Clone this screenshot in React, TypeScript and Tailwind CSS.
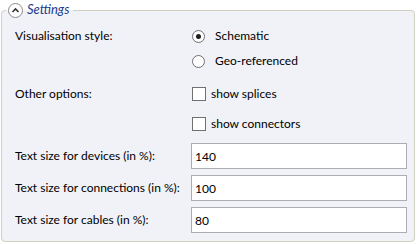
import { useState } from "react";

const sizes = [
  { label: "Text size for devices (in %):", value: "140" },
  { label: "Text size for connections (in %):", value: "100" },
  { label: "Text size for cables (in %):", value: "80" },
];

function Radio({ checked, label, onClick }: { checked: boolean; label: string; onClick: () => void }) {
  return (
    <button onClick={onClick} className="flex items-center h-full text-left">
      <span className="w-[13px] h-[13px] rounded-full border border-[#6f6f6f] bg-white flex items-center justify-center shrink-0">
        {checked && <span className="w-[5px] h-[5px] rounded-full bg-[#1f1f1f]" />}
      </span>
      <span className="ml-[10px]">{label}</span>
    </button>
  );
}

function Check({ label }: { label: string }) {
  const [on, setOn] = useState(false);
  return (
    <button onClick={() => setOn(!on)} className="flex items-center h-full text-left">
      <span className="w-[14px] h-[14px] border border-[#707070] bg-white flex items-center justify-center shrink-0">
        {on && (
          <svg className="w-[10px] h-[10px]" viewBox="0 0 10 10" fill="none" stroke="#222" strokeWidth={1.6}>
            <path d="M1.5 5.2l2.3 2.3 4.7-5" />
          </svg>
        )}
      </span>
      <span className="ml-[5px]">{label}</span>
    </button>
  );
}

export default function App() {
  const [style, setStyle] = useState("schematic");

  return (
    <div className="w-[417px] h-[244px] bg-white text-[12px] text-black" style={{ fontFamily: "Lato, 'Liberation Sans', sans-serif" }}>
      <fieldset className="ml-[1px] w-[414px] h-[242px] border border-[#cfd0c0] rounded-[4px] bg-[#f0f2f7]">
        <legend className="ml-[4px] px-[2px] flex items-center h-[20px]">
          <span className="w-[15px] h-[15px] rounded-full border border-[#8a8a8a] bg-white flex items-center justify-center">
            <svg className="w-[9px] h-[9px]" viewBox="0 0 9 9" fill="none" stroke="#333" strokeWidth={1.6}>
              <path d="M1.5 6l3-3 3 3" />
            </svg>
          </span>
          <span className="ml-[4px] mr-[2px] italic text-[13px] text-[#1d3b8a]">Settings</span>
        </legend>

        <div className="grid grid-cols-[176px_1fr] pl-[13px] pr-[7px] pt-[4px]">
          {/* visualisation */}
          <div className="h-[24px] flex items-center">Visualisation style:</div>
          <div className="h-[24px] pl-[1px]">
            <Radio checked={style === "schematic"} label="Schematic" onClick={() => setStyle("schematic")} />
          </div>
          <div className="h-[26px]" />
          <div className="h-[26px] pl-[1px]">
            <Radio checked={style === "geo"} label="Geo-referenced" onClick={() => setStyle("geo")} />
          </div>

          {/* options */}
          <div className="h-[26px] mt-[7px] flex items-center">Other options:</div>
          <div className="h-[26px] mt-[7px] pl-[1px]">
            <Check label="show splices" />
          </div>
          <div className="h-[26px] mt-[4px]" />
          <div className="h-[26px] mt-[4px] pl-[1px]">
            <Check label="show connectors" />
          </div>

          {/* text sizes */}
          {sizes.map((s) => (
            <div key={s.label} className="contents">
              <div className="h-[26px] mt-[6px] flex items-center">{s.label}</div>
              <input
                defaultValue={s.value}
                className="h-[26px] mt-[6px] w-[216px] border border-[#abadb3] bg-white px-[3px] outline-none text-[12px]"
              />
            </div>
          ))}
        </div>
      </fieldset>
    </div>
  );
}
